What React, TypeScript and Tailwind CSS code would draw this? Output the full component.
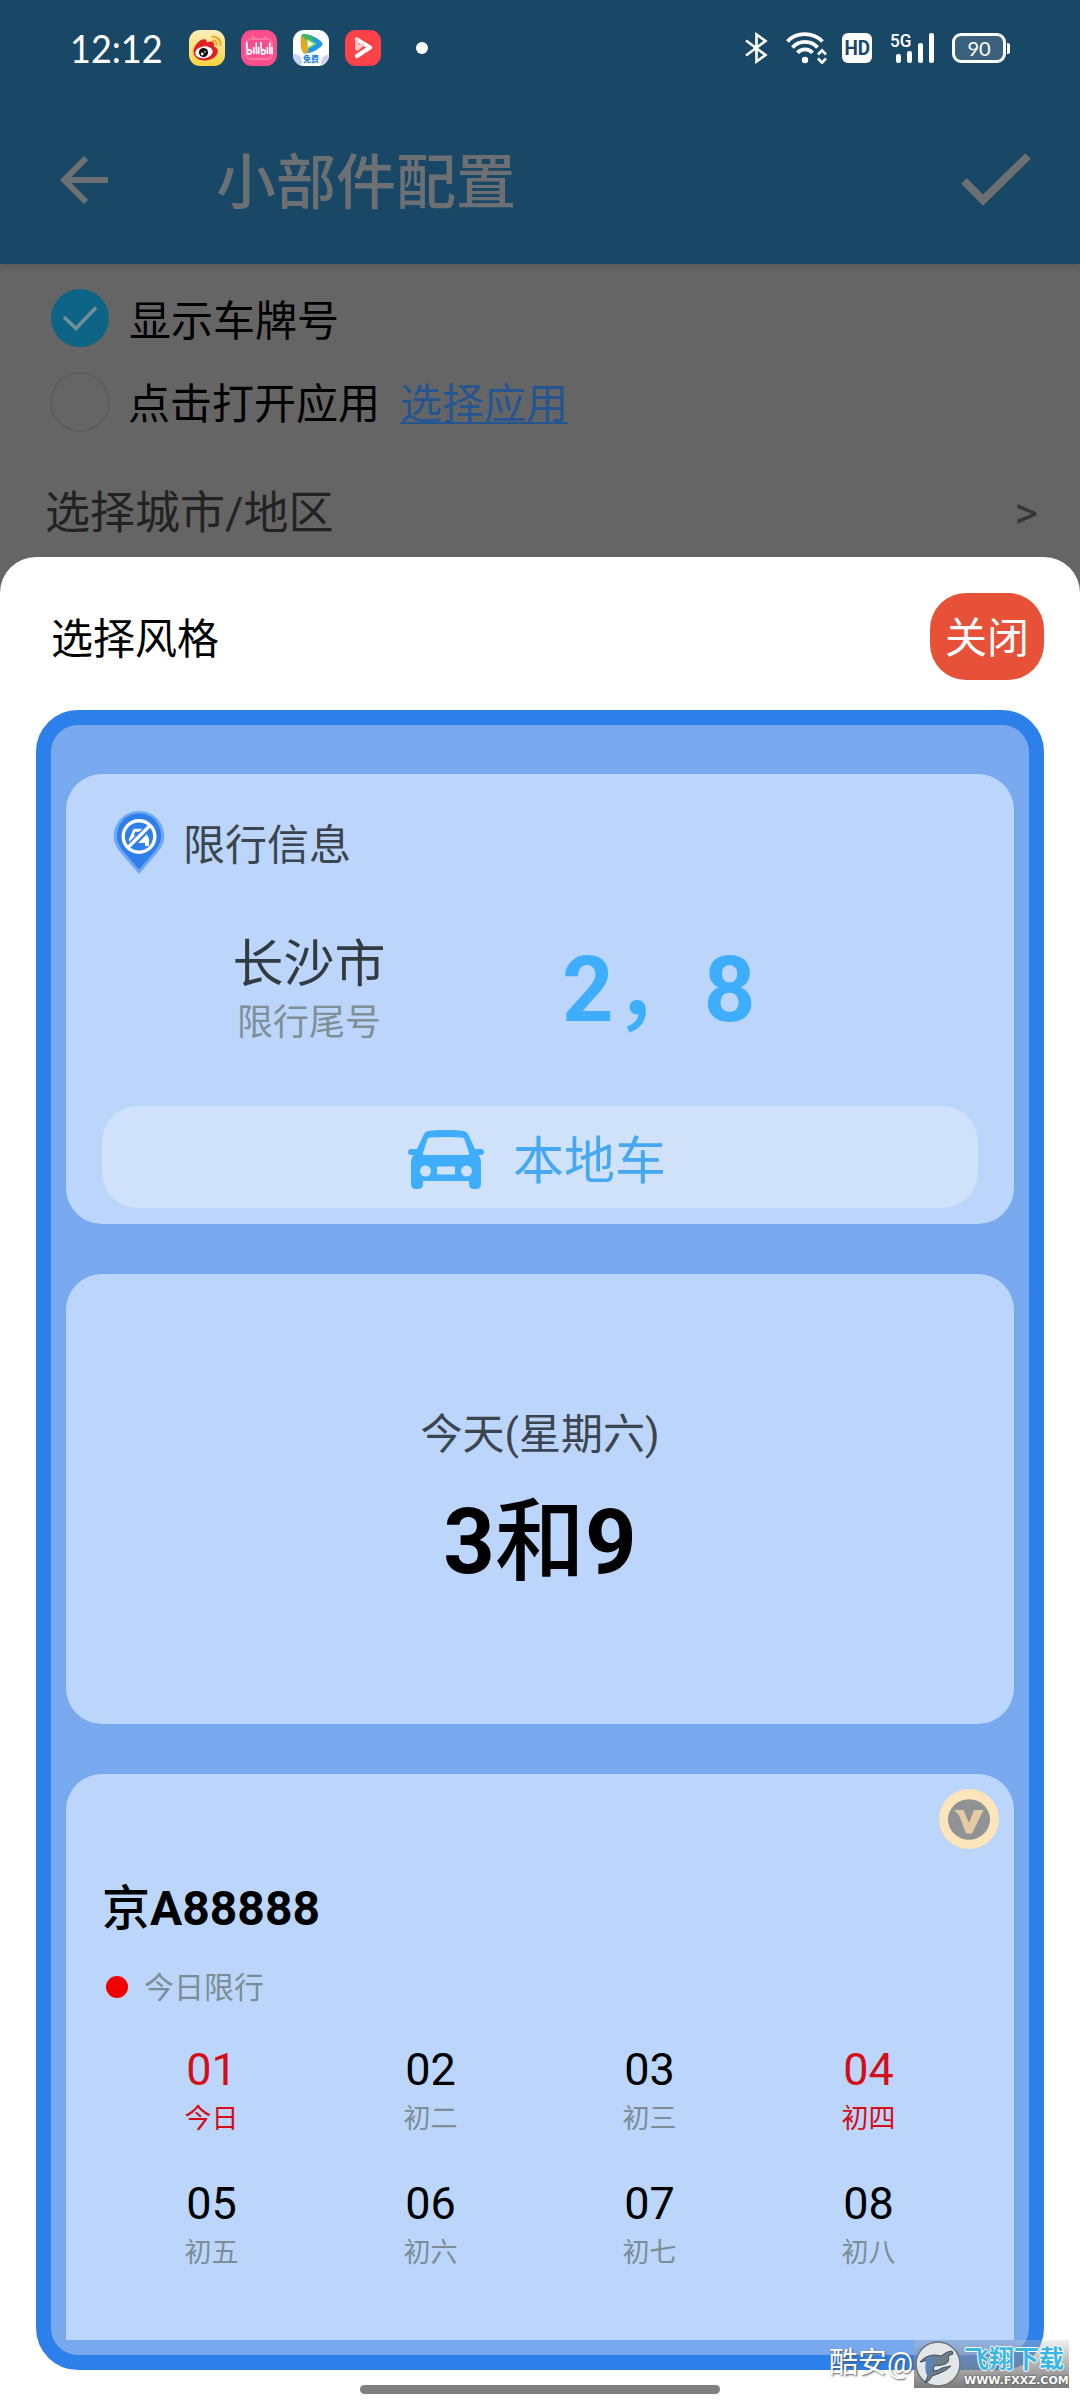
import React from "react";

const days = [
  { n: "01", l: "今日", hot: true },
  { n: "02", l: "初二" },
  { n: "03", l: "初三" },
  { n: "04", l: "初四", hot: true },
  { n: "05", l: "初五" },
  { n: "06", l: "初六" },
  { n: "07", l: "初七" },
  { n: "08", l: "初八" },
];

function WeiboIcon() {
  return (
    <svg className="h-9 w-9" viewBox="0 0 36 36">
      <defs>
        <linearGradient id="wb" x1="0" y1="0" x2="0" y2="1">
          <stop offset="0" stopColor="#fdeebc" />
          <stop offset="1" stopColor="#fbd53c" />
        </linearGradient>
      </defs>
      <rect width="36" height="36" rx="11" fill="url(#wb)" />
      <path d="M4.500 22C4 17 10 9 15.500 9.200c2 .2 2.500 1.800 2.200 3.300 3.500-1.500 7-1.300 7.500 1.700.2 1 0 1.800-.2 2.500 3 .9 4.300 2.800 3.800 5.500C27.500 27.500 21 30.500 15 30.500 9.500 30.500 5 27.500 4.500 22z" fill="#e01f26" />
      <ellipse cx="15" cy="22.300" rx="8.800" ry="5.900" fill="#fff" transform="rotate(-8 15 22.300)" />
      <circle cx="14.500" cy="22.500" r="4.600" fill="#111" />
      <circle cx="13.200" cy="24" r="1.400" fill="#fff" />
      <circle cx="16" cy="21.800" r=".8" fill="#fff" />
      <path d="M23.500 6.500c5 0 8.500 3.500 8 8.500M23.800 10.500c2.500 0 4.200 1.700 4 4" fill="none" stroke="#eda52f" strokeWidth="2.200" strokeLinecap="round" />
    </svg>
  );
}

function BiliIcon() {
  return (
    <svg className="h-9 w-9" viewBox="0 0 36 36">
      <rect width="36" height="36" rx="11" fill="#f84f8c" />
      <rect x="5" y="9" width="26" height="20" rx="5" fill="none" stroke="#fb74a4" strokeWidth="2" />
      <path d="M11 6l3 3M25 6l-3 3" stroke="#fb74a4" strokeWidth="2" />
      <g fill="none" stroke="#fff" strokeWidth="1.700" strokeLinecap="round">
        <path d="M5.800 12.500l.9 11.500c4.500.8 5.500-4.500.6-4M12.600 17.500l.3 6M15.200 13l.3 10.500M17.600 17.500l.1 6" />
        <path d="M19.800 12.500l.9 11.500c4.500.8 5.500-4.500.6-4M26.300 17.500l.3 6M28.700 13l.3 10.500M31 17.500l.1 6" />
      </g>
    </svg>
  );
}

function VideoIcon() {
  return (
    <div className="relative h-9 w-9">
      <svg className="h-9 w-9" viewBox="0 0 36 36">
        <defs>
          <clipPath id="vc"><rect width="36" height="36" rx="11" /></clipPath>
        </defs>
        <g clipPath="url(#vc)">
          <rect width="36" height="36" fill="#fff" />
          <circle cx="1" cy="32" r="8" fill="#c4d6f6" />
          <circle cx="35" cy="32" r="7" fill="#d6cdf3" />
          <path d="M9 4.500c7-1 14 2.500 19.500 7.500 1.500 1.500 1 3-.5 4.500-4.500 4-9 6.500-15 7z" fill="#1f98e8" />
          <path d="M9 4.500C12 3 18 6 21 8L12 24C7 22 7 8 9 4.500z" fill="#3fb45e" />
          <path d="M9 5.500C7.500 10 7.500 18 10 22.500c2 1 4 .5 5.500-.5L12 9z" fill="#f2a31e" />
          <path d="M13 8.500l10.500 5.200L14 19.500z" fill="#9be04c" />
          <path d="M14.500 10.500l6 3.200-5.500 3.300z" fill="#fff" />
        </g>
      </svg>
      <span className="absolute inset-x-0 bottom-[2px] text-center text-[8px] leading-[9px] font-black text-[#1c86d8]">免费</span>
    </div>
  );
}

function RedPlayIcon() {
  return (
    <svg className="h-9 w-9" viewBox="0 0 36 36">
      <rect width="36" height="36" rx="11" fill="#fa4248" />
      <path d="M12 9.500L25 17.500 12 26" fill="none" stroke="#fff" strokeWidth="4.400" strokeLinejoin="round" strokeLinecap="round" />
      <path d="M12 9.500v9.500l5-4" fill="none" stroke="#ffc9ca" strokeWidth="3.600" strokeLinejoin="round" strokeLinecap="round" />
    </svg>
  );
}

function StatusBar() {
  return (
    <div className="flex h-24 items-center pl-[70px] pr-[70px] text-white">
      <span className="w-[119px] origin-left scale-x-[0.925] font-['Lato'] text-[39px] leading-none">12:12</span>
      <div className="flex items-center gap-4">
        <WeiboIcon />
        <BiliIcon />
        <VideoIcon />
        <RedPlayIcon />
      </div>
      <span className="ml-[35px] h-3 w-3 rounded-full bg-white" />
      <div className="ml-auto flex items-center">
        <svg className="h-[32px] w-[24px]" viewBox="0 0 24 32" fill="none" stroke="#fff" strokeWidth="2.600">
          <path d="M2 8.500L21.500 23 12.500 29.500V2.500L21.500 9 2 23.500" />
        </svg>
        <svg className="ml-[18px] h-[32px] w-[42px]" viewBox="0 0 42 32" fill="none" stroke="#fff" strokeWidth="3.800">
          <path d="M1.500 9.500C10-.3 27-.3 36.500 9.500" />
          <path d="M6.500 15.500c6.500-7.500 18.500-7.500 25 0" />
          <path d="M11.500 20.800c4-4.600 11-4.600 15 0" />
          <circle cx="19" cy="28" r="3.200" fill="#fff" stroke="none" />
          <path d="M32 22.500l4-4.200 4 4.200M32 26.500l4 4.200 4-4.200" strokeWidth="2.600" />
        </svg>
        <span className="ml-[14px] flex h-[30px] w-[30px] items-center justify-center rounded-[6px] bg-white text-[#194766]">
          <span className="scale-x-90 font-['Roboto'] text-[21px] leading-none font-bold">HD</span>
        </span>
        <div className="relative ml-[18px] h-[30px] w-[45px]">
          <span className="absolute -top-px left-0 origin-left scale-x-90 font-['Roboto'] text-[19px] leading-[18px] font-medium">5G</span>
          <svg className="h-[30px] w-[45px]" viewBox="0 0 45 30" fill="#fff">
            <rect x="6" y="21" width="5" height="9" rx="2" />
            <rect x="17" y="18" width="5" height="12" rx="2" />
            <rect x="28" y="10" width="5" height="20" rx="2" />
            <rect x="39" y="0" width="5" height="30" rx="2" />
          </svg>
        </div>
        <span className="ml-[17px] flex h-[30px] w-[54px] items-center justify-center rounded-[9px] border-[3px] border-white bg-white/15 font-['Lato'] text-[20px] leading-none">90</span>
        <span className="ml-px h-[11px] w-[3px] rounded-r-[2px] bg-white" />
      </div>
    </div>
  );
}

function TitleBar() {
  return (
    <div className="flex h-[168px] items-center pr-[48px] pl-12 text-[#6d7073]">
      <svg className="h-[72px] w-[72px]" viewBox="0 0 24 24" fill="currentColor">
        <path d="M20 11H7.830l5.590-5.590L12 4l-8 8 8 8 1.410-1.410L7.830 13H20v-2z" />
      </svg>
      <h1 className="mt-[8px] ml-[96px] text-[60px] leading-none font-medium">小部件配置</h1>
      <svg className="ml-auto h-[56px] w-[72px]" viewBox="0 0 72 56" fill="none" stroke="currentColor" strokeWidth="8">
        <path d="M4 29l19 19L68 4" />
      </svg>
    </div>
  );
}

function PinIcon() {
  return (
    <svg className="h-[65px] w-[52px]" viewBox="0 0 52 65">
      <path d="M26 1C12 1 .8 12 .8 26c0 7 3 12 7 17L26 64l18-21c4-5 7.200-10 7.200-17C51.200 12 40 1 26 1z" fill="#6ea7f4" />
      <path d="M26 3.500C13 3.500 4 13.500 4 26c0 6 2.500 10.500 6 15l16 18.500L42 41c3.500-4.500 6-9 6-15 0-12.500-9-22.500-22-22.500z" fill="#2f7fea" />
      <path d="M17 27l3-7q.6-1.200 2-1.200h8q1.400 0 2 1.200l3 7q1 1 1 2v7h-4v-3H20v3h-4v-7q0-1 1-2z" fill="#fff" />
      <path d="M20.500 25.500l1.800-3.800h7.600l1.800 3.800z" fill="#2f7fea" />
      <path d="M15 38L38 15" stroke="#2f7fea" strokeWidth="7" />
      <circle cx="26" cy="26.500" r="15.800" fill="none" stroke="#fff" strokeWidth="3.400" />
      <path d="M15 37.500L37 15.500" stroke="#fff" strokeWidth="3.200" />
    </svg>
  );
}

function CarIcon() {
  return (
    <svg className="mt-[6px] h-[60px] w-[76px]" viewBox="0 0 76 60">
      <path fill="#3eaefc" fillRule="evenodd" d="M20 1q18-2.500 36 0 3 .6 4.500 4l6.500 14h6q3 0 3 3t-3 3h-2.500q2.500 3 2.500 7v22q0 5-5 5h-2q-5 0-5-5v-3H15v3q0 5-5 5H8q-5 0-5-5V32q0-4 2.500-7H3q-3 0-3-3t3-3h6L15.500 5Q17 1.600 20 1zM22 7.500q-1.800.2-2.600 2L15 23q-.6 2 2 2h42q2.600 0 2-2L56.600 9.500q-.8-1.800-2.600-2-16-1-32 0zM17.500 35.500a5.500 5.500 0 100 11 5.500 5.500 0 000-11zM58.500 35.500a5.500 5.500 0 100 11 5.500 5.500 0 000-11zM30 36.500q-1 0-1 1v6q0 1 1 1h16q1 0 1-1v-6q0-1-1-1z" />
    </svg>
  );
}

function VipBadge() {
  return (
    <svg className="absolute top-[15px] right-[15px] h-[60px] w-[60px]" viewBox="0 0 60 60">
      <circle cx="30" cy="30" r="30" fill="#fce4bb" />
      <ellipse cx="30" cy="30.500" rx="21" ry="20.200" fill="#8f9396" />
      <path d="M15 21h9.500l5.500 13 5-13h9.500L33 44.500h-6L20 26z" fill="#e5cba4" />
    </svg>
  );
}

function Watermark() {
  return (
    <div className="absolute top-[2340px] left-[829px] flex h-12 w-[240px]">
      <span className="mt-[6px] w-[85px] overflow-hidden text-[29px] leading-[34px] whitespace-nowrap text-white [text-shadow:1px_1px_2px_#555]">
        酷安@
      </span>
      <div className="flex w-[155px] bg-linear-to-b from-[#cccccc]/30 to-[#747474]/95">
        <svg className="mt-px ml-px h-[46px] w-[46px] shrink-0" viewBox="0 0 46 46">
          <circle cx="23" cy="23" r="22" fill="#e3e6e8" stroke="#6d7478" strokeWidth="1.500" />
          <path d="M5 21q6-7 15-7l6 1q6-5 11-5l1 3-5 2q3 7-6 9l-8 1-1 5q5 0 9-3l9-2q-5 5-11 7l-8 3q-2 5-7 7l4-10 2-12q-5-1-11 1z" fill="#6f7d88" stroke="#3d4b57" strokeWidth="1" />
          <path d="M12 17q4-2 8-1l-3 11-4 9q-5-8-1-19z" fill="#5883b5" />
        </svg>
        <div className="flex flex-col pl-[3px]">
          <span className="mt-[6px] text-[25px] leading-[27px] font-bold whitespace-nowrap text-[#39b6e4] [text-shadow:1px_0_#fff,-1px_0_#fff,0_1px_#fff,0_-1px_#fff]">飞翔下载</span>
          <span className="mt-[2px] origin-left font-['DejaVu_Sans'] text-[11px] leading-[12px] font-bold whitespace-nowrap text-white [text-shadow:0_0_2px_#333]">WWW.FXXZ.COM</span>
        </div>
      </div>
    </div>
  );
}

export default function App() {
  return (
    <div className="relative flex h-[2400px] w-[1080px] flex-col overflow-hidden bg-[#656565] font-['Roboto','Noto_Sans_CJK_SC',sans-serif] text-black">
      <header className="h-[264px] shrink-0 bg-[#194766] shadow-[0_2px_6px_rgba(0,0,0,0.15)]">
        <StatusBar />
        <TitleBar />
      </header>

      <section className="h-[293px] shrink-0 pt-3 text-[42px] leading-none">
        <div className="flex h-[84px] items-center pl-[51px]">
          <svg className="h-[58px] w-[58px]" viewBox="0 0 58 58">
            <circle cx="29" cy="29" r="29" fill="#0e6486" />
            <path d="M13 28l12 11.500L45 18.500" fill="none" stroke="#6f9098" strokeWidth="3.600" />
          </svg>
          <span className="mt-[7px] ml-[20px]">显示车牌号</span>
        </div>
        <div className="flex h-[84px] items-center pl-[50px]">
          <span className="h-[60px] w-[60px] rounded-full border-2 border-[#5d5d5d]" />
          <span className="mt-[6px] ml-[18px]">点击打开应用</span>
          <span className="mt-[6px] ml-5 text-[#255591] underline decoration-[2px] underline-offset-[3px]">选择应用</span>
        </div>
        <div className="mt-[38px] flex h-[60px] items-center justify-between pr-[42px] pl-[45px] text-[45px] text-[#222]">
          <span className="mt-[2px]">选择城市/地区</span>
          <span className="text-[45px] text-[#363636]">&gt;</span>
        </div>
      </section>

      <section className="flex grow flex-col rounded-t-[36px] bg-white px-9 pt-9">
        <div className="flex h-[87px] items-center justify-between pl-[15px] text-[42px] leading-none">
          <h2 className="mt-[6px]">选择风格</h2>
          <button className="flex h-[87px] w-[114px] items-center justify-center rounded-[36px] bg-[#e65137] pt-1 text-white">关闭</button>
        </div>

        <div className="mt-[30px] h-[1660px] rounded-[42px] border-[15px] border-[#2d7fea] bg-[#78a9ee] p-[15px]">
          <div className="flex h-[1600px] flex-col gap-[50px] overflow-hidden pt-[34px]">
            <article className="h-[450px] shrink-0 rounded-[36px] bg-[#bbd6fa] px-9 pt-9">
              <div className="flex h-[65px] items-center pl-[11px]">
                <PinIcon />
                <span className="mt-[6px] ml-[18px] text-[42px] leading-none text-[#3b444f]">限行信息</span>
              </div>
              <div className="flex h-[231px] items-center">
                <div className="flex w-[414px] flex-col items-center pt-[7px]">
                  <span className="text-[51px] leading-[58px] text-[#333b42]">长沙市</span>
                  <span className="text-[36px] leading-[58px] text-[#7f8f98]">限行尾号</span>
                </div>
                <span className="ml-[46px] pt-[1px] text-[90px] leading-none font-bold text-[#3eaefc]">
                  2<span className="font-medium">，</span>8
                </span>
              </div>
              <div className="flex h-[102px] items-center justify-center rounded-[36px] bg-[#cfe2fa] pr-[6px]">
                <CarIcon />
                <span className="mt-[8px] ml-[29px] text-[51px] leading-none text-[#45a8f0]">本地车</span>
              </div>
            </article>

            <article className="flex h-[450px] shrink-0 flex-col items-center rounded-[36px] bg-[#bbd6fa] pt-[131px]">
              <span className="text-[42px] leading-[60px] text-[#3b444f]">今天(星期六)</span>
              <span className="mt-[21px] text-[90px] leading-[114px] font-bold">
                3<span className="font-medium">和</span>9
              </span>
            </article>

            <article className="relative h-[600px] shrink-0 rounded-[36px] bg-[#bbd6fa] px-9 pt-[108px]">
              <VipBadge />
              <div className="text-[48px] leading-[54px] font-bold">
                <span className="font-medium">京</span>A88888
              </div>
              <div className="mt-[32px] flex h-[38px] items-center pl-1">
                <span className="h-[22px] w-[22px] rounded-full bg-[#f00000]" />
                <span className="mt-[2px] ml-[16px] text-[30px] leading-none text-[#7c8d96]">今日限行</span>
              </div>
              <div className="mt-[34px] grid grid-cols-4">
                {days.map((d) => (
                  <div key={d.n} className={d.hot ? "flex h-[134px] flex-col items-center text-[#d40d18]" : "flex h-[134px] flex-col items-center"}>
                    <span className="text-[45px] leading-[60px]">{d.n}</span>
                    <span className={d.hot ? "text-[27px] leading-[38px]" : "text-[27px] leading-[38px] text-[#7c8d96]"}>{d.l}</span>
                  </div>
                ))}
              </div>
            </article>
          </div>
        </div>
        <div className="mx-auto mt-[15px] h-[9px] w-[360px] rounded-full bg-[#808080]" />
      </section>
      <Watermark />
    </div>
  );
}
